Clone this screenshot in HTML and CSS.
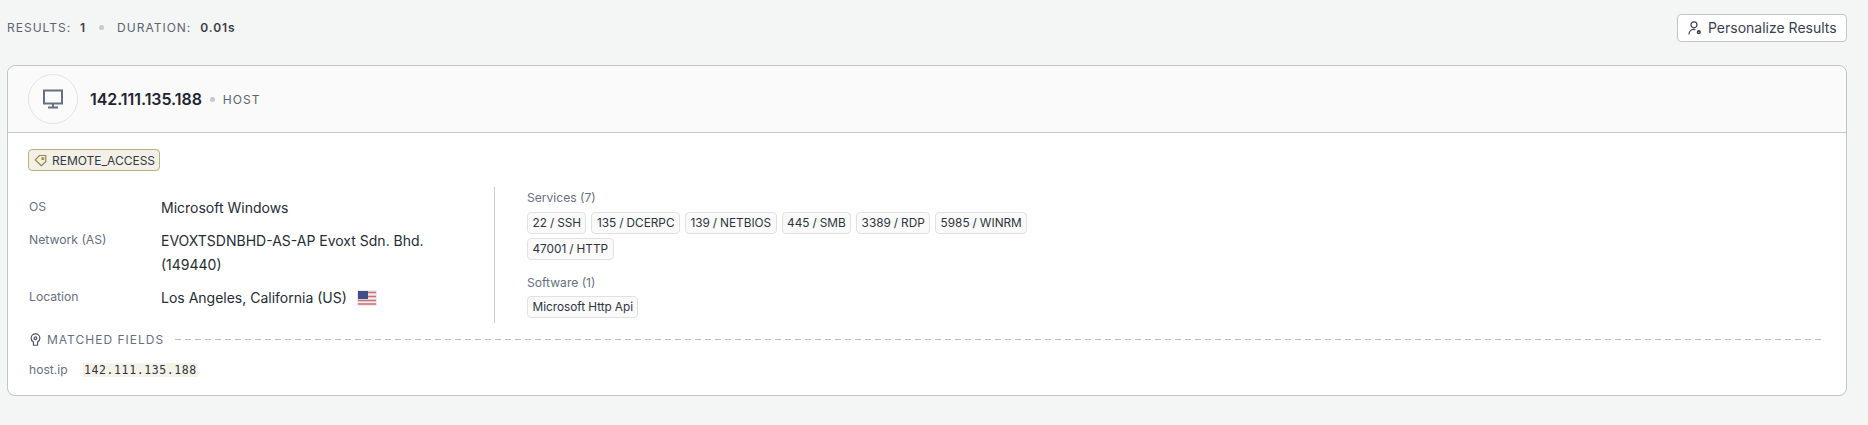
FILE: index.html
```html
<!DOCTYPE html>
<html lang="en">
<head>
  <meta charset="UTF-8" />
  <title>Search Results</title>
  <link rel="stylesheet" href="styles.css">
</head>
<body>
  <div class="topbar">
    <div class="stats">
      <span class="stat-label">RESULTS:</span>
      <span class="stat-value">1</span>
      <span class="dot"></span>
      <span class="stat-label">DURATION:</span>
      <span class="stat-value">0.01s</span>
    </div>
    <button class="personalize" type="button">
      <svg width="14" height="14" viewBox="0 0 14 14" fill="none" stroke="currentColor" stroke-width="1.2">
        <circle cx="6" cy="3.800" r="3"/>
        <path d="M1 13.500c0-3 2-5.200 4.600-5.200.7 0 1.300.1 1.800.4"/>
        <circle cx="10.800" cy="11.200" r="1.300" stroke-width="1.600"/>
      </svg>
      Personalize Results
    </button>
  </div>

  <div class="card">
    <div class="card-header">
      <div class="host-icon">
        <svg width="22" height="20" viewBox="0 0 22 20" fill="none" stroke="#667085" stroke-width="2">
          <rect x="2" y="1.500" width="18" height="13"/>
          <path d="M11 14.500v3.500M6 18.500h10"/>
        </svg>
      </div>
      <h1 class="host-ip">142.111.135.188</h1>
      <span class="dot"></span>
      <span class="host-type">HOST</span>
    </div>

    <div class="card-body">
      <span class="tag">
        <svg width="14" height="14" viewBox="0 0 14 14" fill="none" stroke="#9a8748" stroke-width="1.200" stroke-linejoin="round">
          <path d="M1.200 6.800L5.500 2.500h6.300v6L7.300 12.800z"/>
          <circle cx="8.800" cy="5.600" r="1"/>
        </svg>
        REMOTE_ACCESS
      </span>

      <div class="columns">
        <dl class="details">
          <dt>OS</dt>
          <dd>Microsoft Windows</dd>
          <dt>Network (AS)</dt>
          <dd>EVOXTSDNBHD-AS-AP Evoxt Sdn. Bhd. (149440)</dd>
          <dt>Location</dt>
          <dd class="location">
            Los Angeles, California (US)
            <svg class="flag" width="20" height="16" viewBox="0 0 20 16">
              <rect width="20" height="16" fill="#ececec"/>
              <path d="M1 2.500h18M1 6.500h18M1 10.500h18M1 14h18" stroke="#cf6a74" stroke-width="1.600"/>
              <rect x="1" y="1" width="10" height="8" fill="#3c4f86"/>
            </svg>
          </dd>
        </dl>

        <div class="services">
          <div class="group-label">Services (7)</div>
          <div class="pills">
            <span class="pill">22 / SSH</span>
            <span class="pill">135 / DCERPC</span>
            <span class="pill">139 / NETBIOS</span>
            <span class="pill">445 / SMB</span>
            <span class="pill">3389 / RDP</span>
            <span class="pill">5985 / WINRM</span>
            <span class="pill">47001 / HTTP</span>
          </div>
          <div class="group-label software-label">Software (1)</div>
          <div class="pills">
            <span class="pill">Microsoft Http Api</span>
          </div>
        </div>
      </div>

      <div class="matched-title">
        <svg width="13" height="15" viewBox="0 0 14 15" fill="none" stroke="#4d5562" stroke-width="1.300">
          <path d="M4.800 10.300C3.300 9.400 2.300 8 2.300 6.200a4.700 4.700 0 0 1 9.400 0c0 1.800-1 3.200-2.500 4.100v3.400H4.800z"/>
          <circle cx="7" cy="6.200" r="1.500"/>
        </svg>
        <span>MATCHED FIELDS</span>
        <div class="dashes"></div>
      </div>
      <div class="matched-row">
        <span class="field-name">host.ip</span>
        <code class="field-value">142.111.135.188</code>
      </div>
    </div>
  </div>
</body>
</html>
```

FILE: styles.css
```css
* {
  margin: 0;
  padding: 0;
  box-sizing: border-box;
}

body {
  background: #f4f6f5;
  font-family: 'Inter', sans-serif;
  color: #2a2f38;
  padding: 0 21px 0 7px;
  height: 425px;
  overflow: hidden;
}

.topbar {
  display: flex;
  justify-content: space-between;
  align-items: center;
  height: 65px;
  padding-bottom: 10px;
}

.stats {
  display: flex;
  align-items: center;
  font-size: 12px;
  letter-spacing: 1px;
}

.stat-label {
  color: #5c6470;
  margin-right: 9px;
}

.stat-value {
  font-weight: 600;
  color: #3a3f48;
  letter-spacing: 0.9px;
}

.stats .dot {
  margin: 0 13px;
}

.dot {
  display: inline-block;
  width: 5px;
  height: 5px;
  border-radius: 50%;
  background: #c6cbca;
}

.personalize {
  display: flex;
  align-items: center;
  gap: 6px;
  width: 170px;
  height: 28px;
  padding-left: 10px;
  background: #fff;
  border: 1px solid #c2c7c7;
  border-radius: 4px;
  font-family: 'Inter', sans-serif;
  font-size: 14px;
  color: #394150;
}

.card {
  background: #fff;
  border: 1px solid #bfc5c4;
  border-radius: 8px;
  height: 331px;
}

.card-header {
  display: flex;
  align-items: center;
  height: 67px;
  padding-left: 20px;
  background: #fafafa;
  border-bottom: 1px solid #c5caca;
  border-radius: 8px 8px 0 0;
}

.host-icon {
  display: flex;
  justify-content: center;
  align-items: center;
  width: 50px;
  height: 50px;
  margin-right: 12px;
  background: #fbfbfb;
  border: 1px solid #e2e4e4;
  border-radius: 50%;
}

.host-ip {
  font-size: 16px;
  font-weight: 600;
  color: #1f2530;
  letter-spacing: -0.05px;
}

.card-header .dot {
  margin: 0 8px;
}

.host-type {
  font-size: 12px;
  letter-spacing: 1px;
  color: #5c6470;
}

.card-body {
  padding: 16px 20px 0;
}

.tag {
  display: inline-flex;
  align-items: center;
  gap: 4px;
  height: 22px;
  padding: 0 4px 0 5px;
  background: #f3f0e6;
  border: 1px solid #b9ae85;
  border-radius: 4px;
  font-size: 12px;
  color: #333a46;
}

.columns {
  display: flex;
  margin-top: 16px;
}

.details {
  display: grid;
  grid-template-columns: 133px 268px;
  grid-auto-rows: min-content;
  row-gap: 9px;
  width: 467px;
  height: 136px;
  border-right: 1px solid #c9cccc;
  padding-top: 9px;
}

.details dt {
  font-size: 12.2px;
  line-height: 22px;
  color: #667080;
  padding-left: 1px;
}

.details dd {
  font-size: 14px;
  line-height: 24px;
  color: #262c36;
}

.location {
  white-space: nowrap;
}

.flag {
  vertical-align: -3px;
  margin-left: 6px;
}

.services {
  padding: 2px 0 0 32px;
  width: 560px;
}

.group-label {
  font-size: 12.1px;
  line-height: 18px;
  color: #667080;
}

.software-label {
  margin-top: 14px;
}

.pills {
  display: flex;
  flex-wrap: wrap;
  gap: 4px 5px;
  margin-top: 5px;
}

.software-label + .pills {
  margin-top: 4px;
}

.pill {
  height: 22px;
  padding: 0 4.4px 0 4.5px;
  background: #fafafa;
  border: 1px solid #e0e2e2;
  border-radius: 4px;
  font-size: 11.8px;
  line-height: 20px;
  word-spacing: -0.3px;
  color: #2e3440;
}

.matched-title {
  display: flex;
  align-items: center;
  gap: 5px;
  height: 18px;
  margin-top: 7px;
  padding-left: 1px;
  font-size: 12px;
  letter-spacing: 1px;
  color: #667080;
}

.dashes {
  flex: 1;
  height: 1px;
  margin: 0 5px 0 6px;
  background: repeating-linear-gradient(to right, #b9c0c0 0 6px, transparent 6px 10px);
}

.matched-row {
  display: flex;
  align-items: center;
  margin-top: 14px;
  padding-left: 1px;
}

.field-name {
  width: 54px;
  font-size: 12.1px;
  color: #667080;
}

.field-value {
  padding: 0 1px;
  background: #f5f2e8;
  font-family: 'DejaVu Sans Mono', monospace;
  font-size: 11.5px;
  line-height: 14px;
  letter-spacing: 0.6px;
  color: #2e3440;
}
```
